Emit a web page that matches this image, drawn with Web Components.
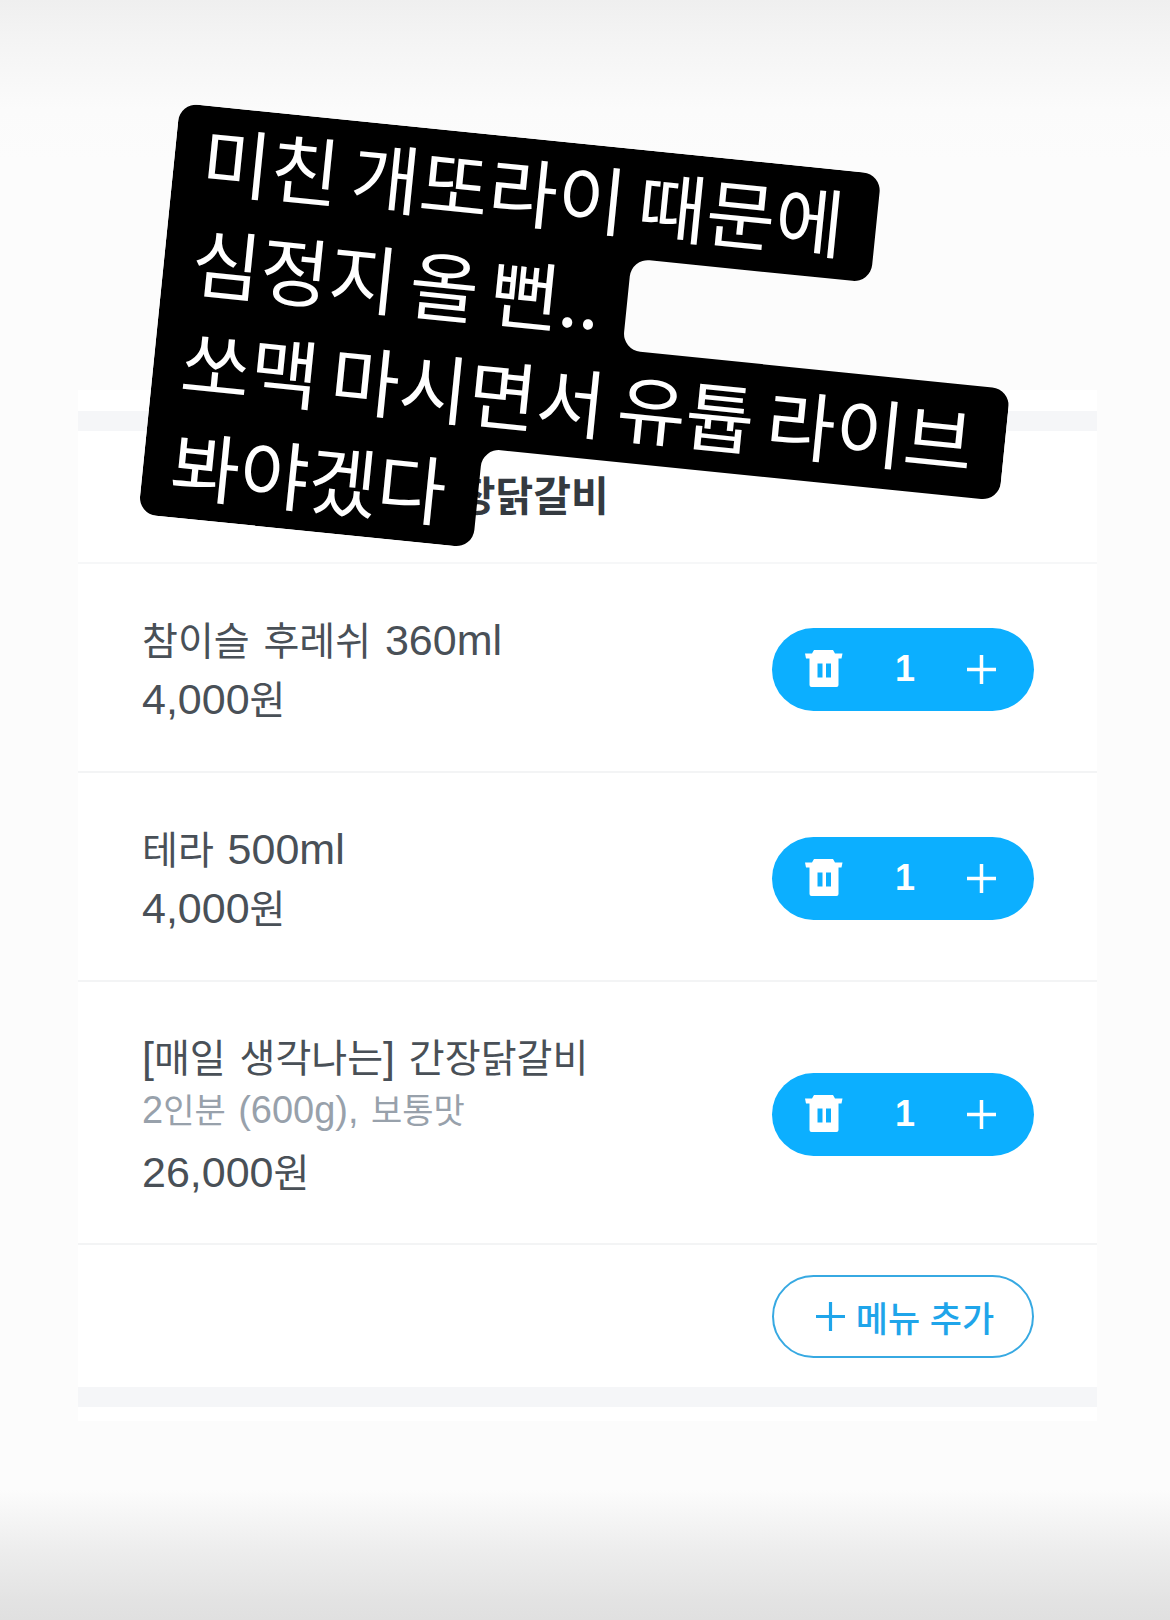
<!DOCTYPE html>
<html lang="ko"><head><meta charset="utf-8">
<style>
html,body{margin:0;padding:0}
body{width:1170px;height:1620px;overflow:hidden;position:relative;font-family:"Liberation Sans","Noto Sans CJK KR",sans-serif;
background:linear-gradient(to bottom,#efefef 0,#f4f4f4 40px,#fbfbfb 110px,#fcfcfc 160px,#fcfcfc 1490px,#ededed 1550px,#e3e3e3 1600px,#e0e0e0 1620px)}
x-row span[slot=name] i,x-row span[slot=price] i{font-style:normal;font-size:43px}
x-row span[slot=opt] i{font-style:normal;font-size:38px}
</style></head><body>
<template id="t-card"><style>
:host{display:block;margin:390px 73px 0 78px;background:#fff;padding:21px 0 14px}
.band{height:20px;background:#f5f6f8}
</style><div class="band"></div><slot></slot><div class="band"></div></template>

<template id="t-head"><style>
:host{display:flex;align-items:center;box-sizing:content-box;height:123px;padding:0 63px 8px 93px;font-weight:700;font-size:41px;color:#343a40;border-bottom:2px solid #f6f7f8;white-space:nowrap}
</style><slot></slot></template>

<template id="t-row"><style>
:host{display:flex;align-items:center;justify-content:space-between;padding:0 63px 0 64px;border-bottom:2px solid #f3f4f5;box-sizing:border-box}
.info{display:flex;flex-direction:column;color:#495057;font-size:39px;line-height:59px;white-space:nowrap;word-spacing:3px;padding-top:4px}
.opt{color:#98a1ab;font-size:34px;line-height:46px;margin-bottom:10px}
.opt.none{display:none}
.info>div{height:59px}.info>.opt{height:46px}
</style><div class="info"><div><slot name="name"></slot></div><div class="opt"><slot name="opt"></slot></div><div><slot name="price"></slot></div></div><slot name="ctl"></slot></template>

<template id="t-qty"><style>
:host{display:flex;align-items:center;justify-content:space-between;width:262px;height:83px;margin-top:3px;border-radius:42px;background:#0cafff;color:#fff;box-sizing:border-box;padding:0 38px 0 33px;font-size:36px;font-weight:700}
svg{display:block}
</style>
<svg width="38" height="38" viewBox="0 0 38 38"><path fill="#fff" fill-rule="evenodd" d="M9 0H28L30 3.500H37.500L36.500 8.500H1L0 3.500H7ZM4.500 8.500H33.500V35a2 2 0 0 1-2 2H6.500a2 2 0 0 1-2-2ZM12.500 13.500v14h5v-14ZM21 13.500v14h5v-14Z"/></svg>
<span>1</span>
<svg width="29" height="29" viewBox="0 0 29 29"><path stroke="#fff" stroke-width="3.500" d="M14.500 0v29M0 14.500h29"/></svg></template>

<template id="t-add"><style>
:host{display:flex;align-items:center;justify-content:center;gap:11px;width:262px;height:83px;padding-left:4px;border-radius:42px;background:#fff;color:#1fa5ea;border:2.500px solid #37a9e2;box-sizing:border-box;font-size:35px;font-weight:500;white-space:nowrap}
svg{display:block}
</style><svg width="29" height="29" viewBox="0 0 29 29"><path stroke="#1fa5ea" stroke-width="3.200" d="M14.500 0v29M0 14.500h29"/></svg><slot></slot></template>

<template id="t-sticker"><style>
:host{display:block;position:absolute;left:180px;top:103px;width:855px;height:413px;transform-origin:0 0;transform:rotate(5.8deg);font-family:"Noto Sans CJK KR",sans-serif}
svg{position:absolute;left:0;top:0}
.t{position:relative;color:#fff;font-size:75px;word-spacing:-9px;line-height:102px;padding:0 0 0 28px;white-space:nowrap;font-weight:400}
.t div{height:102px}
</style>
<svg width="855" height="413" viewBox="0 0 855 413"><path fill="#000" d="M18 0H687a18 18 0 0 1 18 18V91a18 18 0 0 1-18 18H483a18 18 0 0 0-18 18V183a18 18 0 0 0 18 18H837a18 18 0 0 1 18 18V295a18 18 0 0 1-18 18H354a18 18 0 0 0-18 18V395a18 18 0 0 1-18 18H18a18 18 0 0 1-18-18V18a18 18 0 0 1 18-18z"/></svg>
<div class="t"><div>미친 개또라이 때문에</div><div>심정지 올 뻔..</div><div>쏘맥 마시면서 유튭 라이브</div><div>봐야겠다</div></div></template>

<x-card>
<x-head>매일 생각나는 간장닭갈비</x-head>
<x-row style="height:209px"><span slot="name">참이슬 후레쉬 <i>360ml</i></span><span slot="price"><i>4,000</i>원</span><x-qty slot="ctl"></x-qty></x-row>
<x-row style="height:209px"><span slot="name">테라 <i>500ml</i></span><span slot="price"><i>4,000</i>원</span><x-qty slot="ctl"></x-qty></x-row>
<x-row style="height:263px"><span slot="name"><i>[</i>매일 생각나는<i>]</i> 간장닭갈비</span><span slot="opt"><i>2</i>인분 <i>(600g),</i> 보통맛</span><span slot="price"><i>26,000</i>원</span><x-qty slot="ctl"></x-qty></x-row>
<x-row style="height:142px;border-bottom:0;justify-content:flex-end"><x-add slot="ctl">메뉴 추가</x-add></x-row>
</x-card>
<x-sticker></x-sticker>
<script>
for (const [tag, id] of [['x-card','t-card'],['x-head','t-head'],['x-row','t-row'],['x-qty','t-qty'],['x-add','t-add'],['x-sticker','t-sticker']]) {
  customElements.define(tag, class extends HTMLElement {
    constructor(){
      super();
      const root=this.attachShadow({mode:'open'});
      root.appendChild(document.getElementById(id).content.cloneNode(true));
      if(tag==='x-row'&&!this.querySelector('[slot=opt]')){root.querySelector('.opt').classList.add('none');}
    }
  });
}
</script>
</body></html>
